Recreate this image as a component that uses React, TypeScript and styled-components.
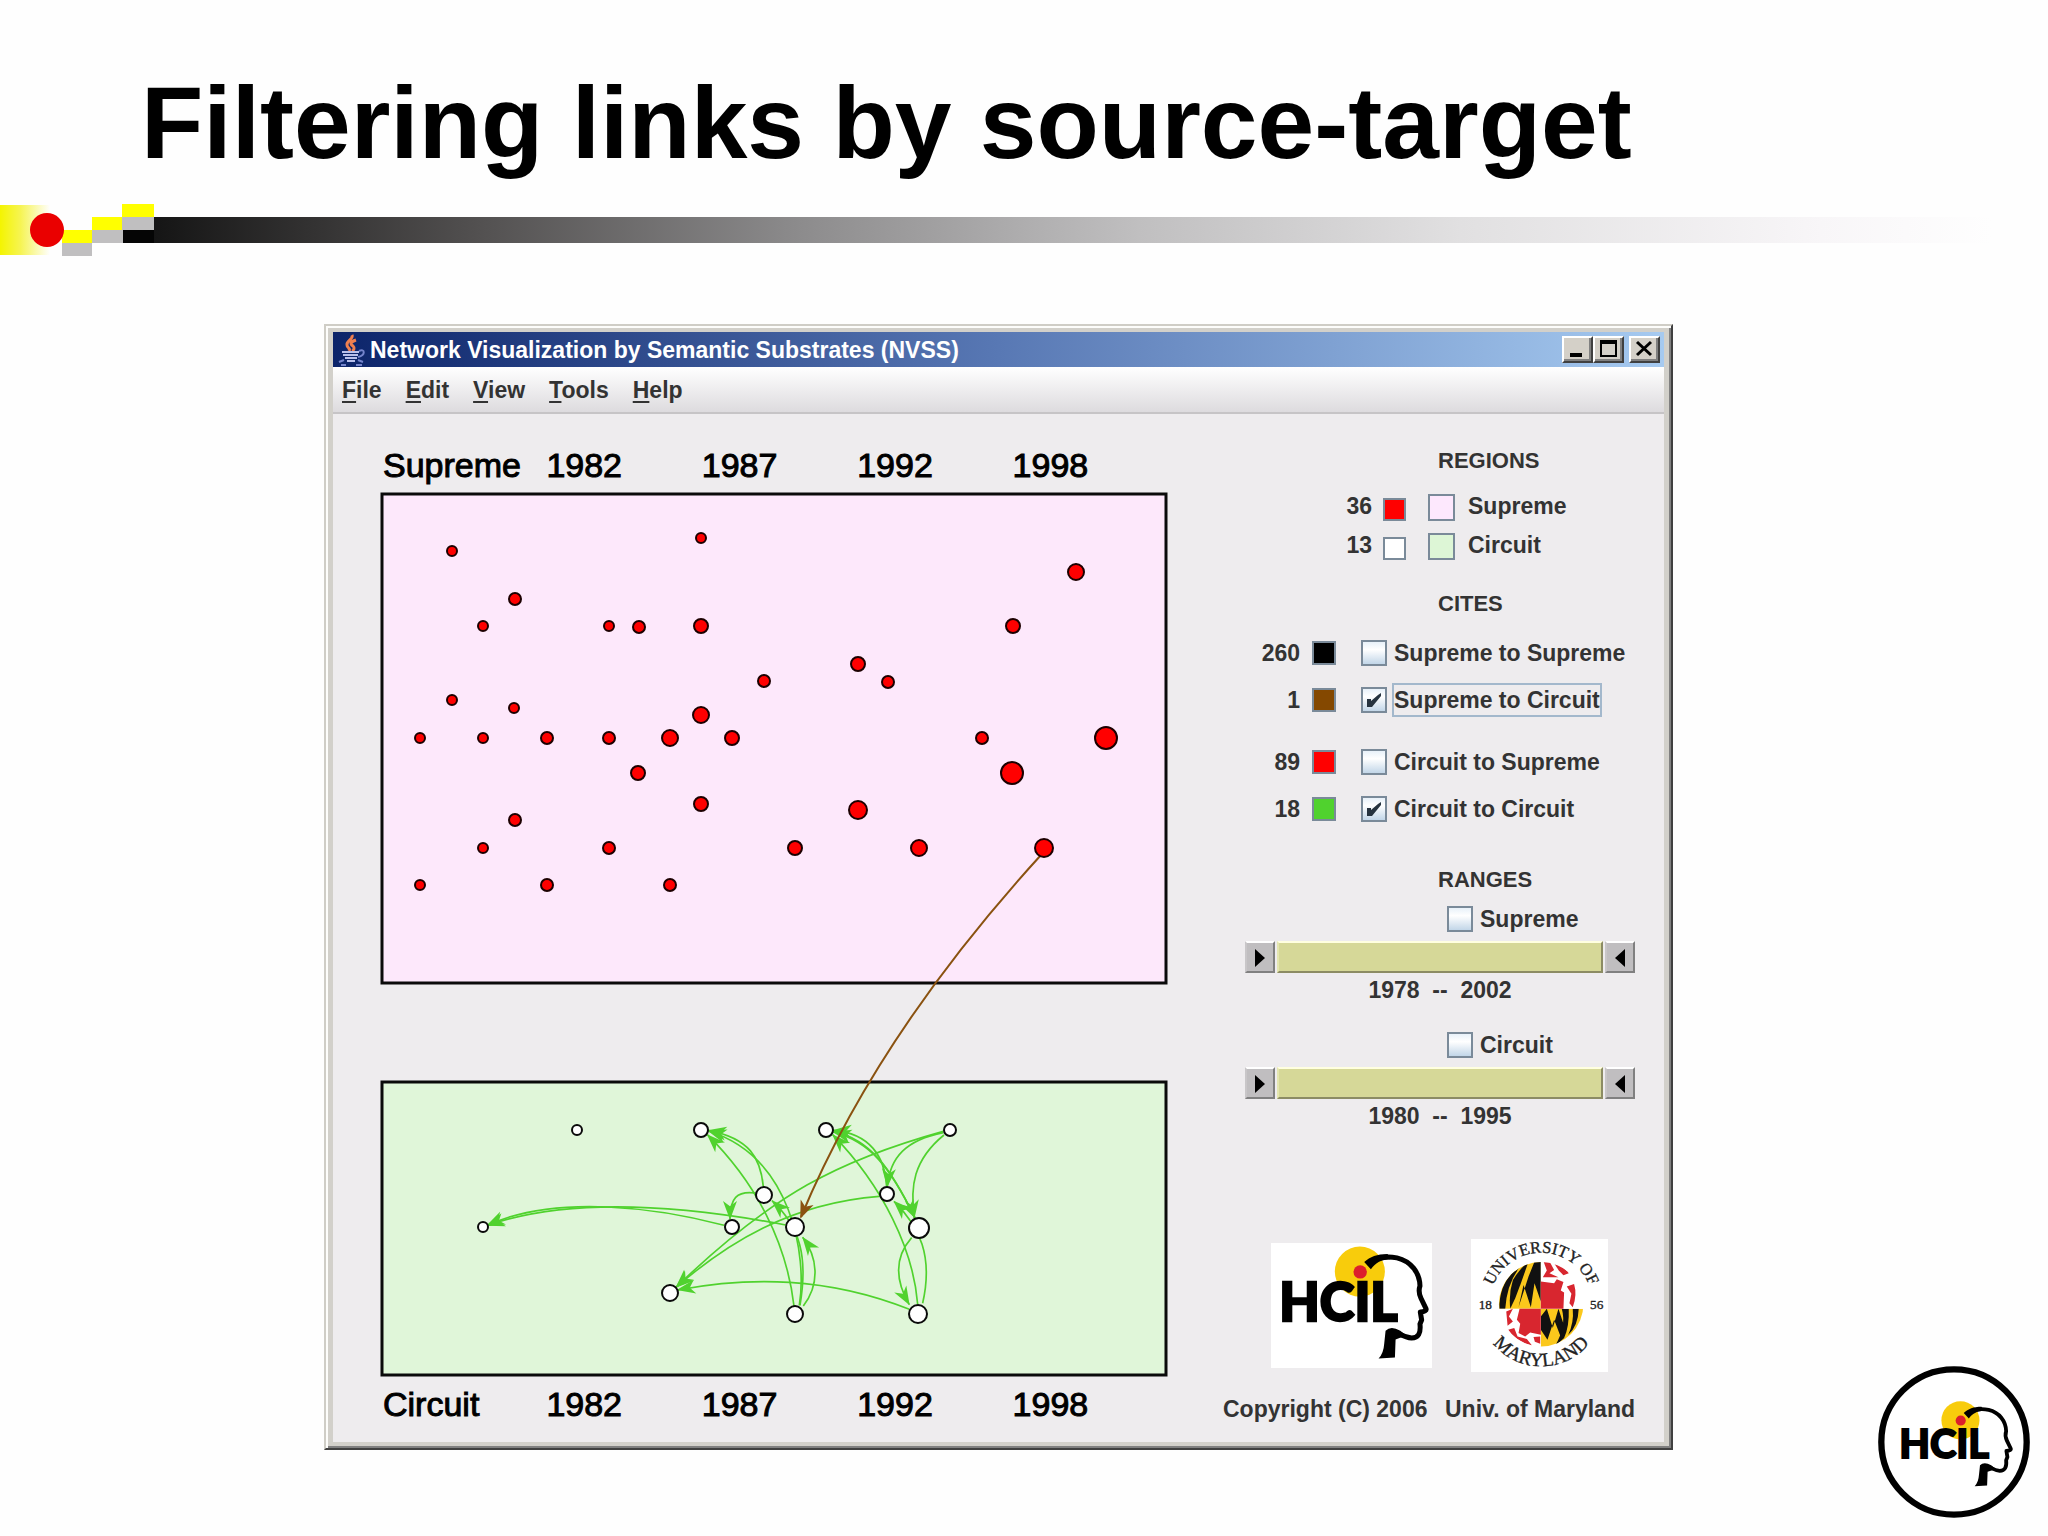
import React, { useState } from "react";
import styled, { createGlobalStyle } from "styled-components";

const GlobalStyle = createGlobalStyle`
  * { box-sizing: border-box; }
  body { margin: 0; background: #fefefe; font-family: "Liberation Sans", Arial, sans-serif; }
`;

/* ---------- slide ---------- */

const Slide = styled.div`
  min-height: 100vh;
  display: flex;
  flex-direction: column;
`;

const SlideTitle = styled.h1`
  margin: 0;
  padding: 63px 0 21px 141px;
  font-size: 102px;
  line-height: 120px;
  font-weight: bold;
  color: #000;
`;

const RuleRow = styled.div`
  display: flex;
  height: 52px;
  align-items: center;
`;

const RuleMark = styled.svg`
  flex: none;
  width: 154px;
  height: 52px;
`;

const RuleBar = styled.div`
  flex: 1;
  height: 26px;
  background: linear-gradient(
    to right, #151515 0%, #525050 17%, #8c8b8c 34%, #c0bfc0 52%, #e1e0e1 69%, #f8f6f8 88%, #fefefe 97%
  );
`;

const SlideBody = styled.main`
  flex: 1;
  display: flex;
  align-items: flex-end;
  gap: 205px;
  padding: 68px 18px 18px 324px;
`;

const CornerLogo = styled.svg`
  flex: none;
  width: 152px;
  height: 152px;
`;

/* ---------- window ---------- */

const Window = styled.section`
  flex: 1;
  align-self: flex-start;
  padding: 6px 7px;
  background: #d2d0ca;
  border: 2px solid;
  border-color: #cfcdc6 #404040 #404040 #cfcdc6;
  box-shadow: inset 2px 2px 0 #fdfdfb, inset -2px -2px 0 #808080;
`;

const TitleBar = styled.header`
  display: flex;
  align-items: center;
  height: 35px;
  padding: 0 4px;
  background: linear-gradient(to right, #0c246a, #5878b4 50%, #a6caf0);
`;

const JavaIcon = styled.svg`
  flex: none;
  width: 30px;
  height: 33px;
`;

const WindowTitle = styled.h2`
  flex: 1;
  margin: 0 0 0 3px;
  font-size: 23px;
  line-height: 30px;
  font-weight: bold;
  color: #fff;
`;

const WindowButtons = styled.div`
  display: flex;
`;

const WindowButton = styled.button<{ $apart?: boolean }>`
  width: 31px;
  height: 27px;
  padding: 0;
  margin-left: ${(p) => (p.$apart ? 5 : 0)}px;
  background: #d4d0c8;
  border: 2px solid;
  border-color: #fff #404040 #404040 #fff;
  box-shadow: inset -2px -2px 0 #808080;
  svg { display: block; width: 27px; height: 23px; }
`;

const MenuBar = styled.nav`
  display: flex;
  gap: 24px;
  padding: 8px 9px 7px;
  background: linear-gradient(#fff, #dddbde);
  border-bottom: 2px solid #c6c4c6;
`;

const MenuItem = styled.button`
  padding: 0;
  border: 0;
  background: none;
  font: bold 23px/30px "Liberation Sans", Arial, sans-serif;
  color: #333;
  u { text-underline-offset: 3px; text-decoration-thickness: 2px; }
`;

const Client = styled.div`
  display: flex;
  gap: 55px;
  padding: 31px 29px 18px 47px;
  background: #eeecee;
`;

/* ---------- plot ---------- */

const PlotColumn = styled.div`
  flex: 1;
  display: flex;
  flex-direction: column;
  gap: 6px;
`;

const AxisRow = styled.div`
  display: grid;
  grid-template-columns: 164fr 156fr 156fr 156fr 156fr;
  padding-left: 3px;
  font-size: 34px;
  line-height: 40px;
  color: #000;
  -webkit-text-stroke: 1px #000;
`;

const Plot = styled.svg`
  display: block;
  width: 100%;
`;

/* ---------- side panel ---------- */

const Side = styled.aside`
  flex: none;
  width: 412px;
  padding-top: 1px;
  display: flex;
  flex-direction: column;
  font-size: 23px;
  line-height: 30px;
  font-weight: bold;
  color: #333;
`;

const SectionTitle = styled.h3<{ $after: number }>`
  margin: 0 0 ${(p) => p.$after}px 215px;
  font-size: 22px;
  line-height: 30px;
`;

const Regions = styled.section`
  margin-bottom: 29px;
`;

const Cites = styled.section`
  margin-bottom: 41px;
`;

const Stack = styled.div<{ $gap: number }>`
  display: flex;
  flex-direction: column;
  gap: ${(p) => p.$gap}px;
`;

const RegionRow = styled.div`
  display: grid;
  grid-template-columns: 149px 34px 49px 1fr;
  align-items: end;
  justify-items: end;
`;

const CiteRow = styled.div`
  display: grid;
  grid-template-columns: 77px 36px 25px 1fr;
  align-items: center;
  justify-items: end;
`;

const RegionName = styled.span`
  justify-self: start;
  padding-left: 13px;
`;

const Swatch = styled.span<{ $color: string; $size: number }>`
  width: ${(p) => p.$size}px;
  height: ${(p) => p.$size}px;
  background: ${(p) => p.$color};
  border: 2px solid #7a8a99;
`;

const CheckRow = styled.div`
  grid-column: 4;
  justify-self: start;
  display: flex;
  align-items: center;
  gap: 7px;
`;

const CheckBox = styled.span`
  position: relative;
  width: 26px;
  height: 26px;
  svg { position: absolute; inset: 0; pointer-events: none; }
`;

const CheckInput = styled.input`
  appearance: none;
  display: block;
  width: 26px;
  height: 26px;
  margin: 0;
  border: 2px solid #7a8a99;
  background: linear-gradient(#e8f1f9, #fff 35%, #c2d6e8);
`;

const CheckLabel = styled.label<{ $focused?: boolean }>`
  outline: ${(p) => (p.$focused ? "2px solid #a3b8cc" : "none")};
  white-space: nowrap;
`;

const Range = styled.div`
  display: flex;
  flex-direction: column;
`;

const RangeHead = styled.div`
  padding: 0 0 7px 224px;
`;

const Slider = styled.div`
  display: flex;
  gap: 2px;
  margin-left: 22px;
`;

const SliderButton = styled.button`
  flex: none;
  width: 30px;
  height: 32px;
  padding: 0;
  background: #c0bec0;
  border: 2px solid;
  border-color: #fff #808080 #808080 #c8c6c8;
  svg { display: block; width: 26px; height: 28px; }
`;

const SliderTrack = styled.input`
  appearance: none;
  flex: 1;
  min-width: 0;
  height: 32px;
  margin: 0;
  background: #d6d898;
  border: 2px solid;
  border-color: #ffffe0 #8c8c64 #8c8c64 #e4e6b0;
  &::-webkit-slider-thumb { appearance: none; width: 1px; height: 28px; background: transparent; }
`;

const RangeText = styled.output`
  margin: 2px 0 0 22px;
  text-align: center;
  white-space: pre;
`;

const Footer = styled.footer`
  margin-top: auto;
`;

const Logos = styled.div`
  display: flex;
  align-items: center;
  gap: 39px;
  padding: 0 0 22px 48px;
`;

const HcilLogo = styled.svg`
  width: 161px;
  height: 125px;
  background: #fff;
`;

const UmdLogo = styled.svg`
  width: 137px;
  height: 133px;
  background: #fff;
`;

const Copyright = styled.div`
  display: flex;
  justify-content: space-between;
  white-space: nowrap;
`;

/* ---------- data ---------- */

const YEARS = ["1982", "1987", "1992", "1998"];

const SUPREME: [number, number, number][] = [
  [452, 551, 6], [701, 538, 6], [515, 599, 7], [483, 626, 6], [609, 626, 6], [639, 627, 7],
  [701, 626, 8], [764, 681, 7], [452, 700, 6], [514, 708, 6], [701, 715, 9], [420, 738, 6],
  [483, 738, 6], [547, 738, 7], [609, 738, 7], [670, 738, 9], [732, 738, 8], [638, 773, 8],
  [701, 804, 8], [515, 820, 7], [483, 848, 6], [609, 848, 7], [420, 885, 6], [547, 885, 7],
  [670, 885, 7], [1076, 572, 9], [1013, 626, 8], [858, 664, 8], [888, 682, 7], [982, 738, 7],
  [1106, 738, 12], [1012, 773, 12], [858, 810, 10], [795, 848, 8], [919, 848, 9], [1044, 848, 10],
];

const CIRCUIT: [number, number, number][] = [
  [701, 1130, 8], [826, 1130, 8], [950, 1130, 7], [764, 1195, 9], [732, 1227, 8],
  [795, 1227, 10], [887, 1194, 8], [919, 1228, 11], [670, 1293, 9], [795, 1314, 9],
  [918, 1314, 10], [577, 1130, 6], [483, 1227, 6],
];

const LINKS = [
  "M370 350 C362 265 330 205 205 181",
  "M478 706 C502 560 456 260 205 183",
  "M462 708 C440 520 350 340 202 194",
  "M346 369 C290 362 270 385 270 447",
  "M480 706 C505 560 480 470 396 392",
  "M490 708 C542 640 532 560 488 502",
  "M437 465 C200 420 -180 370 -460 467",
  "M252 466 C60 415 -250 370 -460 467",
  "M718 379 C450 400 260 520 108 652",
  "M910 184 C600 270 400 370 108 652",
  "M808 718 C560 620 330 620 112 660",
  "M910 188 C800 210 750 260 742 350",
  "M912 195 C820 270 810 350 823 444",
  "M740 350 C735 260 690 190 580 181",
  "M582 184 C690 210 750 290 825 444",
  "M825 444 C750 290 690 215 580 186",
  "M833 702 C820 540 730 350 578 194",
  "M848 700 C880 560 840 470 762 394",
  "M815 503 C765 560 765 630 808 704",
];

/* ---------- drawings ---------- */

function HcilArt() {
  return (
    <>
      <circle cx="479" cy="155" r="75" fill="#f8cc0c" />
      <circle cx="480" cy="156" r="20" fill="#dc1f2c" />
      <text x="415" y="304" textAnchor="middle" fontFamily="Lato, 'Liberation Sans', sans-serif" fontWeight="900" fontSize="157" fill="#000" stroke="#000" strokeWidth="7">
        HCIL
      </text>
      <path
        d="M506 132 C526 114 558 108 590 114 C632 124 658 158 659 198 C654 212 656 222 662 235 L677 266 Q680 274 660 276 L664 300 L659 312 C662 340 654 354 634 354 C612 352 600 342 584 336"
        fill="none" stroke="#000" strokeWidth="15" strokeLinejoin="round"
      />
      <path d="M492 126 C510 110 530 102 562 102 L570 118 C544 118 526 128 512 148Z" fill="#000" />
      <path d="M556 332 Q572 316 600 332 L620 348 Q600 352 586 358 L584 412 L535 415 Q550 400 552 370Z" fill="#000" />
    </>
  );
}

function UmdArt() {
  return (
    <>
      <defs>
        <clipPath id="globe"><circle cx="1023" cy="253" r="127" /></clipPath>
        <path id="arcTop" d="M868 253 A155 155 0 0 1 1178 253" />
        <path id="arcBottom" d="M836 253 A187 187 0 0 0 1210 253" />
      </defs>
      <g clipPath="url(#globe)">
        <rect x="890" y="120" width="132" height="147" fill="#fbc81c" />
        <rect x="1022" y="267" width="132" height="120" fill="#fbc81c" />
        <g fill="#111">
          <path d="M897 267 Q897 200 935 160 L960 140 Q920 190 915 267Z" />
          <path d="M938 180 Q960 145 985 125 L962 190 L945 235 L930 267 Q925 220 938 180Z" />
          <path d="M985 170 L1003 125 L1022 120 V245 L1003 190 L992 262 L970 195 L955 262 Z" />
          <path d="M1022 290 L1040 267 L1058 325 L1075 267 L1092 318 L1082 352 L1062 300 L1042 360 L1022 330Z" />
          <path d="M1085 267 H1106 Q1108 320 1092 355 L1064 380 Q1100 320 1085 267Z" />
          <path d="M1118 267 H1136 Q1134 320 1104 346 Q1122 310 1118 267Z" />
        </g>
        <rect x="1022" y="120" width="132" height="147" fill="#fff" />
        <rect x="890" y="267" width="132" height="120" fill="#fff" />
        <g fill="#d8262f">
          <path d="M1022 185 L1062 190 L1070 178 L1090 186 L1082 212 L1092 218 L1090 267 H1022Z" />
          <path d="M1030 124 L1050 128 L1062 150 L1048 160 L1075 172 L1028 172 L1040 152Z" />
          <path d="M1062 130 Q1090 138 1106 160 L1090 166 L1076 152Z" />
          <path d="M1100 200 L1122 192 Q1132 225 1118 262 L1108 250 L1114 222Z" />
          <path d="M1022 267 V345 L990 338 L975 350 L955 340 L960 312 L950 300 L958 267Z" />
          <path d="M918 275 L938 267 L926 290 L938 305 L922 318Z" />
          <path d="M924 330 L942 325 L952 350 L980 358 L996 378 Q950 368 924 330Z" />
          <path d="M1000 352 L1020 350 V372 L1004 366Z" />
        </g>
      </g>
      <g fontFamily="'Liberation Serif', serif" fontWeight="normal" fill="#222" stroke="#222" strokeWidth="1">
        <text fontSize="50" textAnchor="middle"><textPath href="#arcTop" startOffset="50%">UNIVERSITY OF</textPath></text>
        <text fontSize="58" textAnchor="middle"><textPath href="#arcBottom" startOffset="50%">MARYLAND</textPath></text>
        <text x="835" y="268" fontSize="40">18</text>
        <text x="1170" y="268" fontSize="40">56</text>
      </g>
    </>
  );
}

function NetworkPlot() {
  return (
    <Plot viewBox="380 491 788 887" role="img" aria-label="Citation network">
      <defs>
        <marker id="greenTip" markerUnits="userSpaceOnUse" markerWidth="60" markerHeight="50" refX="54" refY="22" orient="auto" viewBox="0 0 60 50" overflow="visible">
          <path d="M56 22 L0 1 L16 22 L0 43Z" fill="#50d22e" />
        </marker>
        <marker id="brownTip" markerUnits="userSpaceOnUse" markerWidth="20" markerHeight="14" refX="16" refY="7" orient="auto" overflow="visible">
          <path d="M18 7 L0 0 L5 7 L0 14Z" fill="#8a5210" />
        </marker>
      </defs>
      <g stroke="#0a0a0a" strokeWidth="3">
        <rect x="382" y="494" width="784" height="489" fill="#fde8fb" />
        <rect x="382" y="1082" width="784" height="293" fill="#e0f6d9" />
      </g>
      <g transform="translate(640 1070) scale(0.3333)" fill="none" stroke="#50d22e" strokeWidth="5">
        {LINKS.map((d) => <path key={d} d={d} markerEnd="url(#greenTip)" />)}
      </g>
      <path d="M1041 855 Q876 1036 801 1217" fill="none" stroke="#8a5210" strokeWidth="2" markerEnd="url(#brownTip)" />
      <g fill="#ff0000" stroke="#1c0000" strokeWidth="2">
        {SUPREME.map(([x, y, r]) => <circle key={`${x}-${y}`} cx={x} cy={y} r={r - 1} />)}
      </g>
      <g fill="#ffffff" stroke="#0a0a0a" strokeWidth="2">
        {CIRCUIT.map(([x, y, r]) => <circle key={`${x}-${y}`} cx={x} cy={y} r={r - 1} />)}
      </g>
    </Plot>
  );
}

function Check({ id, label, on = false, focused = false }: { id: string; label: string; on?: boolean; focused?: boolean }) {
  const [checked, setChecked] = useState(on);
  return (
    <CheckRow>
      <CheckBox>
        <CheckInput id={id} type="checkbox" checked={checked} onChange={() => setChecked(!checked)} />
        {checked && (
          <svg viewBox="0 0 26 26">
            <path d="M6 12 H10 V14 L17 8 L20 6 V9 L11 20 H6Z" fill="#26333f" />
          </svg>
        )}
      </CheckBox>
      <CheckLabel htmlFor={id} $focused={focused}>{label}</CheckLabel>
    </CheckRow>
  );
}

function RangeControl({ name, from, to }: { name: string; from: number; to: number }) {
  return (
    <Range>
      <RangeHead><Check id={`range-${name}`} label={name} /></RangeHead>
      <Slider>
        <SliderButton aria-label={`${name} start`}>
          <svg viewBox="0 0 26 28"><path d="M8 6 L18 15 L8 24Z" /></svg>
        </SliderButton>
        <SliderTrack type="range" aria-label={`${name} years`} min={from} max={to} defaultValue={from} />
        <SliderButton aria-label={`${name} end`}>
          <svg viewBox="0 0 26 28"><path d="M18 6 L8 15 L18 24Z" /></svg>
        </SliderButton>
      </Slider>
      <RangeText>{`${from}  --  ${to}`}</RangeText>
    </Range>
  );
}

function Cite({ count, color, label, on, focused }: { count: number; color: string; label: string; on?: boolean; focused?: boolean }) {
  return (
    <CiteRow>
      <span>{count}</span>
      <Swatch $color={color} $size={24} />
      <Check id={label.replace(/ /g, "-")} label={label} on={on} focused={focused} />
    </CiteRow>
  );
}

export default function App() {
  return (
    <Slide>
      <GlobalStyle />
      <SlideTitle>Filtering links by source-target</SlideTitle>
      <RuleRow>
        <RuleMark viewBox="0 0 154 52">
          <defs>
            <linearGradient id="glow">
              <stop offset="0" stopColor="#f4f400" />
              <stop offset="0.4" stopColor="#f6f450" />
              <stop offset="1" stopColor="#fefefe" />
            </linearGradient>
          </defs>
          <rect x="0" y="1" width="50" height="50" fill="url(#glow)" />
          <rect x="123" y="26" width="31" height="13" fill="#050505" />
          <g fill="#c0bfc0">
            <rect x="62" y="39" width="30" height="13" />
            <rect x="92" y="26" width="31" height="13" />
            <rect x="122" y="13" width="32" height="13" />
          </g>
          <g fill="#ffff00">
            <rect x="62" y="26" width="30" height="13" />
            <rect x="92" y="13" width="30" height="13" />
            <rect x="122" y="0" width="32" height="13" />
          </g>
          <circle cx="47" cy="26" r="17" fill="#ea0000" />
        </RuleMark>
        <RuleBar />
      </RuleRow>

      <SlideBody>
        <Window>
          <TitleBar>
            <JavaIcon viewBox="0 0 30 33" fill="none">
              <path d="M15 2 C17 6 9 8 10 12 C10 15 14 15 12 18 M19 7 C13 9 13 11 16 13 C18 15 17 17 15 18" stroke="#f08050" strokeWidth="3" />
              <path d="M5 19 H22 M6 22 H21 M8 25 H20 M10 28 H18" stroke="#b8c0ec" strokeWidth="2" />
              <path d="M22 18 C28 15 29 22 21 24 M7 27 L2 29 M21 27 L26 29 M4 32 H9 M19 32 H25" stroke="#7484cc" strokeWidth="2" />
            </JavaIcon>
            <WindowTitle>Network Visualization by Semantic Substrates (NVSS)</WindowTitle>
            <WindowButtons>
              <WindowButton aria-label="Minimize">
                <svg viewBox="0 0 27 23"><rect x="6" y="15" width="12" height="4" /></svg>
              </WindowButton>
              <WindowButton aria-label="Maximize">
                <svg viewBox="0 0 27 23">
                  <path d="M5 2 H22 V19 H5Z M7 6 V17 H20 V6Z" fillRule="evenodd" />
                </svg>
              </WindowButton>
              <WindowButton aria-label="Close" $apart>
                <svg viewBox="0 0 27 23"><path d="M6 4 L20 17 M20 4 L6 17" stroke="#000" strokeWidth="3" /></svg>
              </WindowButton>
            </WindowButtons>
          </TitleBar>
          <MenuBar>
            {["File", "Edit", "View", "Tools", "Help"].map((m) => (
              <MenuItem key={m}><u>{m[0]}</u>{m.slice(1)}</MenuItem>
            ))}
          </MenuBar>
          <Client>
            <PlotColumn>
              <AxisRow><span>Supreme</span>{YEARS.map((y) => <span key={y}>{y}</span>)}</AxisRow>
              <NetworkPlot />
              <AxisRow><span>Circuit</span>{YEARS.map((y) => <span key={y}>{y}</span>)}</AxisRow>
            </PlotColumn>
            <Side>
              <Regions>
                <SectionTitle $after={15}>REGIONS</SectionTitle>
                <Stack $gap={9}>
                  <RegionRow>
                    <span>36</span>
                    <Swatch $color="#ff0000" $size={23} />
                    <Swatch $color="#fde8fd" $size={27} />
                    <RegionName>Supreme</RegionName>
                  </RegionRow>
                  <RegionRow>
                    <span>13</span>
                    <Swatch $color="#ffffff" $size={23} />
                    <Swatch $color="#ddf6d6" $size={27} />
                    <RegionName>Circuit</RegionName>
                  </RegionRow>
                </Stack>
              </Regions>
              <Cites>
                <SectionTitle $after={19}>CITES</SectionTitle>
                <Stack $gap={32}>
                  <Stack $gap={17}>
                    <Cite count={260} color="#000000" label="Supreme to Supreme" />
                    <Cite count={1} color="#844800" label="Supreme to Circuit" on focused />
                  </Stack>
                  <Stack $gap={17}>
                    <Cite count={89} color="#ff0000" label="Circuit to Supreme" />
                    <Cite count={18} color="#50d22e" label="Circuit to Circuit" on />
                  </Stack>
                </Stack>
              </Cites>
              <section>
                <SectionTitle $after={9}>RANGES</SectionTitle>
                <Stack $gap={25}>
                  <RangeControl name="Supreme" from={1978} to={2002} />
                  <RangeControl name="Circuit" from={1980} to={1995} />
                </Stack>
              </section>
              <Footer>
                <Logos>
                  <HcilLogo viewBox="213 70 482 373" role="img" aria-label="HCIL"><HcilArt /></HcilLogo>
                  <UmdLogo viewBox="813 57 410 400" role="img" aria-label="University of Maryland"><UmdArt /></UmdLogo>
                </Logos>
                <Copyright><span>Copyright (C) 2006</span><span>Univ. of Maryland</span></Copyright>
              </Footer>
            </Side>
          </Client>
        </Window>
        <CornerLogo viewBox="54 45 458 458" role="img" aria-label="HCIL">
          <circle cx="283" cy="274" r="219" fill="#fff" stroke="#000" strokeWidth="19" />
          <g transform="translate(-64 90) scale(0.765)"><HcilArt /></g>
        </CornerLogo>
      </SlideBody>
    </Slide>
  );
}
